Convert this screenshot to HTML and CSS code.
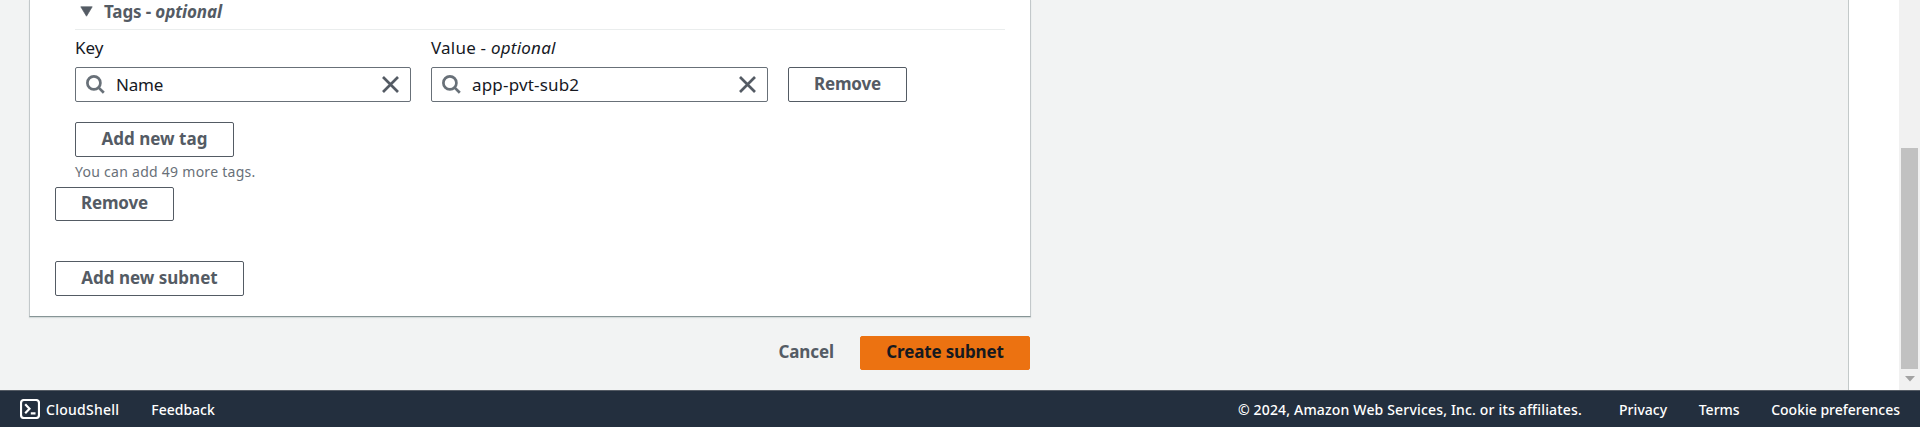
FILE: index.html
```
<!DOCTYPE html>
<html lang="en">
<head>
<meta charset="utf-8">
<title>Create subnet</title>
<link rel="stylesheet" href="styles.css">
</head>
<body>
<div class="workspace">
  <main class="main">
    <section class="panel">
      <div class="tags">
        <h3 class="tags-title"><svg class="caret" width="13" height="11" viewBox="0 0 13 11"><path d="M.8 .8h11.4L6.5 10.2z"/></svg><span>Tags - <i>optional</i></span></h3>
        <div class="tag-row">
          <div class="field field-key">
            <label class="label">Key</label>
            <div class="input">
              <svg class="search" width="19" height="19" viewBox="0 0 19 19"><circle cx="7.9" cy="7.9" r="6.5"/><path d="M12.4 12.4l5.4 5.4"/></svg>
              <span class="value">Name</span>
              <svg class="clear" width="17" height="17" viewBox="0 0 17 17"><path d="M1 1l15 15M16 1L1 16"/></svg>
            </div>
          </div>
          <div class="field field-value">
            <label class="label">Value - <i>optional</i></label>
            <div class="input">
              <svg class="search" width="19" height="19" viewBox="0 0 19 19"><circle cx="7.9" cy="7.9" r="6.5"/><path d="M12.4 12.4l5.4 5.4"/></svg>
              <span class="value">app-pvt-sub2</span>
              <svg class="clear" width="17" height="17" viewBox="0 0 17 17"><path d="M1 1l15 15M16 1L1 16"/></svg>
            </div>
          </div>
          <button class="btn btn-remove">Remove</button>
        </div>
        <button class="btn btn-tag">Add new tag</button>
        <p class="hint">You can add 49 more tags.</p>
      </div>
      <button class="btn btn-remove btn-short">Remove</button>
      <button class="btn btn-subnet">Add new subnet</button>
    </section>
    <div class="actions">
      <a class="cancel">Cancel</a>
      <button class="btn btn-primary">Create subnet</button>
    </div>
  </main>
  <aside class="side"></aside>
  <div class="scrollbar"><div class="thumb"></div><svg class="down" width="10" height="6" viewBox="0 0 10 6"><path d="M0 0h10L5 5.5z"/></svg></div>
</div>
<footer class="footer">
  <svg class="shell" width="20" height="20" viewBox="0 0 20 20"><rect x="1" y="1" width="18" height="18" rx="3"/><path d="M5.2 5.3l4.3 4.5-4.3 4.5M10.8 14.3h4.7"/></svg>
  <span class="cloudshell">CloudShell</span>
  <span class="feedback">Feedback</span>
  <span class="copyright">© 2024, Amazon Web Services, Inc. or its affiliates.</span>
  <span class="privacy">Privacy</span>
  <span class="link">Terms</span>
  <span class="link">Cookie preferences</span>
</footer>
</body>
</html>
```
FILE: styles.css
```
* { box-sizing: border-box; }
body { margin: 0; height: 427px; overflow: hidden; display: flex; flex-direction: column; font-family: "Noto Sans", "Open Sans", sans-serif; font-size: 17px; color: #16191f; background: #fff; }
span { white-space: nowrap; }
svg { display: block; flex: none; }
.workspace { display: flex; height: 390px; }
.main { width: 1849px; background: #f2f3f3; border-right: 1px solid #c3c9c9; padding-left: 29px; }
.side { width: 50px; background: #fff; }
.scrollbar { width: 21px; background: #f1f1f1; padding: 48px 2px 0; }
.panel { width: 1002px; height: 317px; background: #fff; border: 1px solid #c3c8ca; border-top: 0; border-bottom-color: #879596; box-shadow: 0 1px 1px #d5dbdb; padding-left: 25px; display: flex; flex-direction: column; align-items: flex-start; }
.tags { padding-left: 20px; width: 950px; height: 187px; }
.tags-title { margin: 0; height: 30px; border-bottom: 1px solid #eaeded; display: flex; align-items: flex-start; font-size: 17px; font-weight: 700; line-height: 24px; letter-spacing: -.12px; color: #545b64; padding-left: 5px; }
.caret { fill: #545b64; stroke: #545b64; stroke-width: .7; margin: 6px 11px 0 0; }
.tag-row { display: flex; align-items: flex-end; gap: 20px; height: 72px; }
.field-key { width: 336px; }
.field-value { width: 337px; }
.label { display: block; height: 31px; line-height: 24px; letter-spacing: .22px; }
.field-key .label { letter-spacing: 0; }
.input { height: 35px; border: 1px solid #687078; border-radius: 2px; display: flex; align-items: center; padding: 0 11px 0 10px; }
.search { fill: none; stroke: #687078; stroke-width: 2.7; margin-right: 11px; }
.value { flex: 1; line-height: 24px; letter-spacing: .18px; }
.field-key .value { letter-spacing: -.2px; }
.clear { fill: none; stroke: #545b64; stroke-width: 2.7; }
.btn { height: 35px; border: 1px solid #545b64; border-radius: 2px; background: #fff; color: #545b64; font: 700 17px/24px "Noto Sans", "Open Sans", sans-serif; padding: 0 0 2px; display: flex; align-items: center; justify-content: center; }
.btn-remove { width: 119px; letter-spacing: -.2px; }
.btn-tag { width: 159px; margin-top: 20px; }
.btn-short { height: 34px; }
.btn-subnet { width: 189px; margin-top: 40px; }
.hint { margin: 5px 0 0; font-size: 14px; line-height: 20px; color: #687078; letter-spacing: .27px; }
.actions { width: 1001px; display: flex; justify-content: flex-end; align-items: center; padding-top: 19px; }
.cancel { font-weight: 700; color: #545b64; padding-bottom: 3px; margin-right: 26px; letter-spacing: -.1px; }
.btn-primary { width: 170px; height: 34px; background: #ec7211; border-color: #ec7211; color: #16191f; letter-spacing: -.15px; }
.thumb { height: 221px; margin-top: 100px; background: #c1c1c1; }
.down { fill: #a3a3a3; margin: 7px 0 0 4px; }
.footer { height: 37px; background: #232f3e; border-top: 1px solid #545b64; color: #fff; font-size: 14px; font-weight: 500; line-height: 20px; display: flex; align-items: center; padding: 0 20px; }
.footer span { padding-top: 2px; }
.shell { fill: none; stroke: #fff; stroke-width: 2.2; margin-right: 6px; }
.cloudshell { letter-spacing: .25px; }
.feedback { margin-left: 32px; }
.copyright { margin-left: auto; letter-spacing: .17px; }
.privacy { margin-left: 37px; letter-spacing: .05px; }
.link { margin-left: 31.5px; }
```
